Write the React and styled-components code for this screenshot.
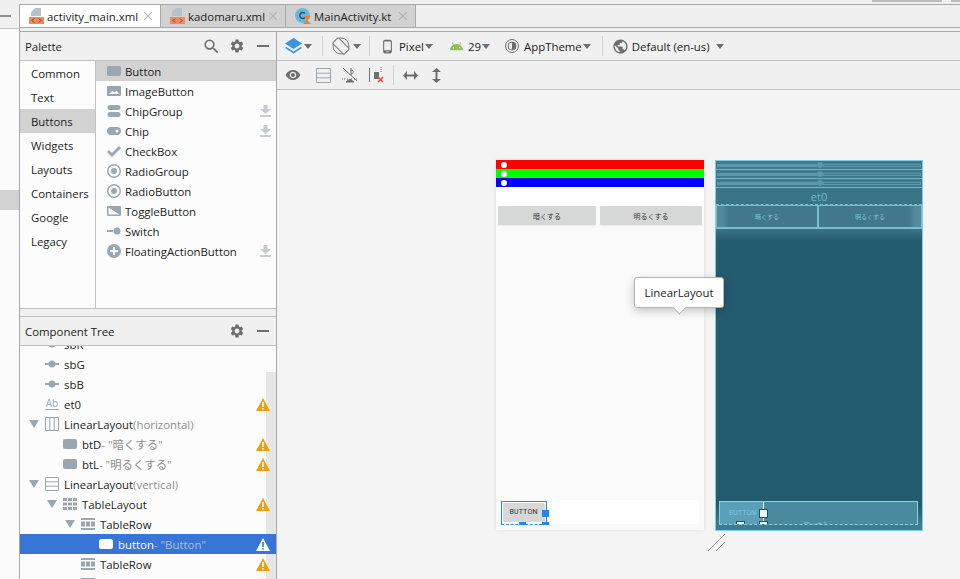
import React from 'react';
import styled, { createGlobalStyle } from 'styled-components';
import { MdSettings, MdSearch, MdVisibility, MdPublic, MdPhoneAndroid, MdAndroid } from 'react-icons/md';

const Global = createGlobalStyle`
  html, body { margin: 0; padding: 0; background: #f0f0f0; }
  * { box-sizing: border-box; }
`;

const FONT = `"Open Sans", "Noto Sans CJK JP", sans-serif`;
const ICON = '#9aa7b0';
const LINE = '#a8a8a8';

const Root = styled.div`
  display: flex;
  width: 960px;
  height: 579px;
  overflow: hidden;
  background: #f0f0f0;
  font-family: ${FONT};
  font-size: 11.4px;
  color: #1c1c1c;
`;

/* left tool strip, mostly cut off by the crop */
const Strip = styled.div`
  width: 20px;
  display: flex;
  flex-direction: column;
  border-right: 1px solid ${LINE};
  margin-top: 4px;
`;
const StripTop = styled.div`
  height: 25px;
  border-bottom: 1px solid #c4c4c4;
  padding-top: 11px;
`;
const StripDash = styled.div`
  width: 11px;
  height: 2px;
  background: #8c8c8c;
`;
const StripBody = styled.div`
  flex: 1;
  background: #fbfbfb;
  padding-top: 161px;
`;
const StripMark = styled.div`
  height: 20px;
  background: #d2d2d2;
`;

const Main = styled.div`
  flex: 1;
  min-width: 0;
  display: flex;
  flex-direction: column;
`;
const TopEdge = styled.div`
  height: 5px;
  display: flex;
  padding-left: 852px;
  border-bottom: 1px solid ${LINE};
`;
const EdgePiece = styled.div`
  height: 2px;
  width: ${(p) => p.$w}px;
  margin-right: ${(p) => p.$mr}px;
  background: #bdbdbd;
`;
const TabBar = styled.div`
  height: 23px;
  display: flex;
  border-bottom: 1px solid ${LINE};
`;
const Tab = styled.div`
  width: ${(p) => p.$w}px;
  display: flex;
  align-items: center;
  padding-left: 9px;
  font-size: 11.4px;
  background: ${(p) => (p.$active ? '#ffffff' : '#d1d1d1')};
  border-right: 1px solid ${LINE};
`;
const TabName = styled.span`
  margin-left: 3px;
  flex: 1;
  white-space: nowrap;
`;
const TabClose = styled.svg`
  width: 8px;
  height: 8px;
  margin-right: 8px;
  stroke: #b4b4b4;
  stroke-width: 1.2;
`;
const TabGap = styled.div`
  height: 4px;
  border-bottom: 1px solid ${LINE};
`;
const Workspace = styled.div`
  flex: 1;
  min-height: 0;
  display: flex;
`;

const SidePanel = styled.div`
  width: 257px;
  display: flex;
  flex-direction: column;
  border-right: 1px solid ${LINE};
`;
const PanelHead = styled.div`
  height: 29px;
  flex: none;
  display: flex;
  align-items: center;
  padding: 0 5px 0 5px;
  border-bottom: 1px solid #c2c2c2;
`;
const PanelTitle = styled.span`
  flex: 1;
`;
const PanelIcon = styled.span`
  display: flex;
  width: 26px;
  justify-content: center;
  color: #6e6e6e;
`;
const Minimize = styled.div`
  width: 12px;
  height: 2px;
  margin: 0 2px 0 7px;
  background: #6e6e6e;
`;
const PaletteBody = styled.div`
  height: 248px;
  flex: none;
  display: flex;
  background: #fcfcfc;
  border-bottom: 1px solid #c2c2c2;
`;
const Categories = styled.div`
  width: 76px;
  border-right: 1px solid #c2c2c2;
`;
const Category = styled.div`
  height: 24px;
  line-height: 26px;
  padding-left: 11px;
  background: ${(p) => (p.$on ? '#d2d2d2' : 'transparent')};
`;
const WidgetList = styled.div`
  flex: 1;
`;
const Widget = styled.div`
  height: 20px;
  display: flex;
  align-items: center;
  padding: 0 5px 0 11px;
  background: ${(p) => (p.$on ? '#d2d2d2' : 'transparent')};
`;
const WidgetName = styled.span`
  flex: 1;
  margin-left: 4px;
`;
const Splitter = styled.div`
  height: 8px;
  flex: none;
  border-bottom: 1px solid #c2c2c2;
`;
const TreeBody = styled.div`
  flex: 1;
  min-height: 0;
  position: relative;
  overflow: hidden;
  background: #fcfcfc;
`;
const TreeScroll = styled.div`
  position: absolute;
  right: 0;
  top: 26px;
  bottom: 0;
  width: 10px;
  background: #e6e6e6;
`;
const TreeRows = styled.div`
  position: relative;
  margin-top: -12px;
`;
const Row = styled.div`
  height: 20px;
  display: flex;
  align-items: center;
  padding-left: ${(p) => 8 + p.$level * 18}px;
  padding-right: 6px;
  white-space: nowrap;
  color: ${(p) => (p.$on ? '#ffffff' : 'inherit')};
  background: ${(p) => (p.$on ? '#3875d7' : 'transparent')};
`;
const Arrow = styled.span`
  width: 17px;
  flex: none;
  display: flex;
  padding-left: 1px;
`;
const Detail = styled.span`
  color: ${(p) => (p.$on ? '#a9bfe2' : '#8f8f8f')};
`;
const RowName = styled.span`
  margin-left: 5px;
`;
const Warn = styled.svg`
  width: 14px;
  height: 13px;
  margin-left: auto;
  flex: none;
`;

const Design = styled.div`
  flex: 1;
  min-width: 0;
  display: flex;
  flex-direction: column;
`;
const ToolRow = styled.div`
  height: 29px;
  flex: none;
  display: flex;
  align-items: center;
  padding-left: ${(p) => p.$pl}px;
  border-bottom: 1px solid #c2c2c2;
  white-space: nowrap;
`;
const Tool = styled.span`
  display: flex;
  align-items: center;
  margin-left: ${(p) => p.$ml || 0}px;
  color: #6e6e6e;
`;
const ToolLabel = styled.span`
  color: #1c1c1c;
  margin-left: ${(p) => p.$ml || 0}px;
`;
const Sep = styled.div`
  width: 1px;
  height: 20px;
  background: #cfcfcf;
  margin-left: ${(p) => p.$ml}px;
`;
const Caret = styled.span`
  width: 0;
  height: 0;
  margin-left: ${(p) => p.$ml || 2}px;
  border-left: 4px solid transparent;
  border-right: 4px solid transparent;
  border-top: 5px solid #6e6e6e;
`;

const Canvas = styled.div`
  flex: 1;
  position: relative;
  display: flex;
  align-items: flex-start;
  gap: 11px;
  padding: 70px 0 0 219px;
  background: #f4f4f4;
`;
const Device = styled.div`
  position: relative;
  width: 208px;
  height: 370px;
  display: flex;
  flex-direction: column;
  background: #fafafa;
  box-shadow: 0 0 4px rgba(0, 0, 0, 0.09);
`;
const SeekBar = styled.div`
  height: 9px;
  display: flex;
  align-items: center;
  padding-left: 5px;
  background: ${(p) => p.$color};
`;
const Thumb = styled.div`
  width: 6px;
  height: 6px;
  border-radius: 50%;
  background: #ffffff;
`;
const EditArea = styled.div`
  height: 19px;
  background: #ffffff;
`;
const ButtonRow = styled.div`
  display: flex;
  gap: 4px;
  padding: 0 2px;
`;
const PreviewButton = styled.div`
  width: ${(p) => p.$w}px;
  height: 19px;
  display: flex;
  align-items: center;
  justify-content: center;
  background: #d6d7d7;
  border-radius: 1px;
  font-size: 7px;
  color: #3a3a3a;
  box-shadow: 0 1px 1px rgba(0, 0, 0, 0.06);
`;
const BottomTable = styled.div`
  margin: auto 5px 6px 4px;
  height: 24px;
  background: #ffffff;
  border-radius: 3px;
  display: flex;
  position: relative;
`;
const Selected = styled.div`
  position: absolute;
  left: 1px;
  top: 1px;
  width: 46px;
  height: 24px;
  padding: 1px 0 0 1px;
  border: 1px solid #1e88f0;
  border-bottom: 1px dashed #1e88f0;
  border-left-style: solid;
`;
const TinyButton = styled.div`
  width: 41px;
  height: 18px;
  display: flex;
  align-items: center;
  justify-content: center;
  background: #d6d7d7;
  font-family: "Roboto", sans-serif;
  font-size: 7px;
  letter-spacing: 0.2px;
  color: #333333;
  box-shadow: 1px 1px 1px rgba(0, 0, 0, 0.15);
`;
const Handle = styled.div`
  position: absolute;
  left: ${(p) => p.$x}px;
  top: ${(p) => p.$y}px;
  width: 7px;
  height: ${(p) => p.$h}px;
  background: #1e88f0;
`;

const Blueprint = styled.div`
  position: relative;
  width: 208px;
  height: 371px;
  display: flex;
  flex-direction: column;
  overflow: hidden;
  background: linear-gradient(#3a7487 0, #3a7487 68px, #235c6e 80px, #235c6e 345px, #3f7b8e 362px, #3f7b8e 100%);
  border: 1px solid #7cd0e8;
`;
const BpSeek = styled.div`
  height: 9px;
  display: flex;
  align-items: center;
  padding: 0 1px;
  background: #3f7a8d;
  border-bottom: 1px solid #6fb3c8;
`;
const BpFill = styled.div`
  width: 100px;
  height: 3px;
  background: #5b97ad;
`;
const BpKnob = styled.div`
  width: 6px;
  height: 6px;
  border-radius: 50%;
  background: #5b97ad;
`;
const BpTrack = styled.div`
  flex: 1;
  height: 3px;
  border: 1px solid #5b97ad;
`;
const BpEdit = styled.div`
  height: 17px;
  display: flex;
  align-items: center;
  justify-content: center;
  color: #72b8cd;
  font-size: 11px;
  border-bottom: 1px dashed #78bdd2;
`;
const BpButtons = styled.div`
  display: flex;
  height: 24px;
  border-bottom: 1px solid #78bdd2;
`;
const BpButton = styled.div`
  flex: ${(p) => p.$grow};
  display: flex;
  align-items: center;
  justify-content: center;
  font-size: 6px;
  color: #7cc6da;
  background: linear-gradient(${(p) => p.$edge}, #528a9e 0, #528a9e 6px, #41788c 12px);
  border: 1px solid #78bdd2;
`;
const BpTable = styled.div`
  position: absolute;
  left: 3px;
  right: 4px;
  top: 340px;
  height: 24px;
  display: flex;
  overflow: hidden;
  background: #4a8a9f;
  border: 1px solid #86d4ea;
  border-bottom-style: dashed;
`;
const BpCell = styled.div`
  position: relative;
  width: 45px;
  padding: 7px 0 0 9px;
  margin: -1px 0 -1px -1px;
  background: #5c9fb8;
  border: 1px solid #ffffff;
  border-bottom: 1px dashed #a8dff0;
  font-family: "Roboto", sans-serif;
  font-size: 7px;
  color: #84c4da;
`;
const BpHandle = styled.div`
  position: absolute;
  left: ${(p) => p.$x}px;
  top: ${(p) => p.$y}px;
  width: 9px;
  height: ${(p) => p.$h}px;
  background: #eaf8fd;
  border: 1px solid #1f5466;
  border-bottom-width: ${(p) => (p.$h < 9 ? 0 : 1)}px;
`;
const BpClip = styled.span`
  margin: 18px 0 0 40px;
  font-size: 6px;
  color: #86c8dc;
`;

const Tooltip = styled.div`
  position: absolute;
  left: 357px;
  top: 187px;
  width: 90px;
  height: 31px;
  display: flex;
  align-items: center;
  justify-content: center;
  background: #ffffff;
  border: 1px solid #b4b4b4;
  border-radius: 3px;
  box-shadow: 0 3px 8px rgba(0, 0, 0, 0.22);
  &::after {
    content: '';
    position: absolute;
    left: 39px;
    bottom: -6px;
    width: 10px;
    height: 10px;
    background: #ffffff;
    border-right: 1px solid #b4b4b4;
    border-bottom: 1px solid #b4b4b4;
    transform: rotate(45deg) scale(0.9);
  }
`;
const Resize = styled.svg`
  position: absolute;
  left: 431px;
  top: 444px;
`;

const XmlIcon = () => (
  <svg width="15" height="16" viewBox="0 0 15 16">
    <path d="M6 0h6v8H2V4z" fill="#b9c1c7" />
    <rect y="9" width="15" height="7" fill="#ee8a5f" />
    <path d="M5 10.5L3 12.5l2 2M10 10.5l2 2-2 2" fill="none" stroke="#7a3a1c" strokeWidth="1" />
  </svg>
);
const KotlinIcon = () => (
  <svg width="16" height="16" viewBox="0 0 16 16">
    <circle cx="7.5" cy="7.5" r="7.5" fill="#6bb7dc" />
    <path d="M10 5.5a3 3 0 1 0 0 4" fill="none" stroke="#24566e" strokeWidth="1.5" />
    <path d="M8 16l4-4.5-4-3.5h8l-4 4 4 4z" fill="#ee8034" />
  </svg>
);
const Close = () => (
  <TabClose viewBox="0 0 8 8">
    <path d="M0 0l8 8M8 0L0 8" />
  </TabClose>
);
const Download = () => (
  <svg width="11" height="12" viewBox="0 0 11 12" fill="#c5cbd0">
    <path d="M3.5 0h4v4H11L5.500 9 0 4h3.500zM0 10h11v2H0z" />
  </svg>
);

const W = ({ children, w = 14, h = 14 }) => (
  <svg width={w} height={h} viewBox="0 0 14 14" fill={ICON} style={{ flex: 'none' }}>
    {children}
  </svg>
);
const widgetIcons = {
  button: <rect y="2" width="14" height="10" rx="2" />,
  image: <path fillRule="evenodd" d="M1 2h12a1 1 0 0 1 1 1v8a1 1 0 0 1-1 1H1a1 1 0 0 1-1-1V3a1 1 0 0 1 1-1zM2 10h10L9.500 6.500 7.500 8.500 5.500 7z" />,
  chipgroup: <path d="M3 1h8a2.500 2.500 0 0 1 0 5H3a2.500 2.500 0 0 1 0-5zM3 8h8a2.500 2.500 0 0 1 0 5H3a2.500 2.500 0 0 1 0-5z" />,
  chip: <path fillRule="evenodd" d="M4 3h6a4 4 0 0 1 0 8H4a4 4 0 0 1 0-8zM10 5.500a1.500 1.500 0 1 0 0 3 1.500 1.500 0 0 0 0-3z" />,
  check: <path d="M0 8l2-2 3 3 7-7 2 2-9 9z" />,
  radio: <path fillRule="evenodd" d="M7 0a7 7 0 1 1 0 14A7 7 0 0 1 7 0zm0 1.500a5.500 5.500 0 1 0 0 11 5.500 5.500 0 0 0 0-11zM7 4a3 3 0 1 1 0 6 3 3 0 0 1 0-6z" />,
  toggle: <path fillRule="evenodd" d="M1 2h12a1 1 0 0 1 1 1v8a1 1 0 0 1-1 1H1a1 1 0 0 1-1-1V3a1 1 0 0 1 1-1zM1.500 3.500V10.500H12.500z" />,
  switch: <path d="M0 6h6v2H0zM10 3.500a3.500 3.500 0 1 1 0 7 3.500 3.500 0 0 1 0-7z" />,
  fab: <path fillRule="evenodd" d="M7 0a7 7 0 1 1 0 14A7 7 0 0 1 7 0zM6 3v3H3v2h3v3h2V8h3V6H8V3z" />,
  seek: <path d="M0 6h5v2H0zM9 6h5v2H9zM7 3.500a3.500 3.500 0 1 1 0 7 3.500 3.500 0 0 1 0-7z" />,
  horizontal: <path fill="none" stroke={ICON} d="M.5.500h13v13H.5zM4.800.500v13M9.200.500v13" />,
  vertical: <path fill="none" stroke={ICON} d="M.5.500h13v13H.5zM.5 4.800h13M.5 9.200h13" />,
  table: <path d="M0 1h4v3H0zM5 1h4v3H5zM10 1h4v3h-4zM0 5.500h4v3H0zM5 5.500h4v3H5zM10 5.500h4v3h-4zM0 10h4v3H0zM5 10h4v3H5zM10 10h4v3h-4z" />,
  tablerow: <path fillRule="evenodd" d="M0 1h14v2H0zM0 11h14v2H0zM0 4.500h4v5H0zM5 4.500h4v5H5zM10 4.500h4v5h-4z" />,
  white: <rect y="2" width="14" height="10" rx="2.500" fill="#ffffff" />,
};

const categories = ['Common', 'Text', 'Buttons', 'Widgets', 'Layouts', 'Containers', 'Google', 'Legacy'];
const widgets = [
  { name: 'Button', icon: 'button', on: true },
  { name: 'ImageButton', icon: 'image' },
  { name: 'ChipGroup', icon: 'chipgroup', dl: true },
  { name: 'Chip', icon: 'chip', dl: true },
  { name: 'CheckBox', icon: 'check' },
  { name: 'RadioGroup', icon: 'radio' },
  { name: 'RadioButton', icon: 'radio' },
  { name: 'ToggleButton', icon: 'toggle' },
  { name: 'Switch', icon: 'switch' },
  { name: 'FloatingActionButton', icon: 'fab', dl: true },
];
const tree = [
  { level: 0, icon: 'seek', name: 'sbR' },
  { level: 0, icon: 'seek', name: 'sbG' },
  { level: 0, icon: 'seek', name: 'sbB' },
  { level: 0, text: true, name: 'et0', warn: true },
  { level: 0, open: true, icon: 'horizontal', name: 'LinearLayout', detail: '(horizontal)' },
  { level: 1, icon: 'button', name: 'btD', detail: '- "暗くする"', warn: true },
  { level: 1, icon: 'button', name: 'btL', detail: '- "明るくする"', warn: true },
  { level: 0, open: true, icon: 'vertical', name: 'LinearLayout', detail: '(vertical)' },
  { level: 1, open: true, icon: 'table', name: 'TableLayout', warn: true },
  { level: 2, open: true, icon: 'tablerow', name: 'TableRow' },
  { level: 3, icon: 'white', name: 'button', detail: '- "Button"', warn: true, on: true },
  { level: 2, icon: 'tablerow', name: 'TableRow', warn: true },
  { level: 2, icon: 'tablerow', name: 'TableRow', warn: true },
];

const TextIcon = () => (
  <svg width="14" height="14" viewBox="0 0 14 14" style={{ flex: 'none' }}>
    <text x="7" y="10" textAnchor="middle" fontSize="10" fontFamily="Open Sans, sans-serif" fill={ICON}>Ab</text>
    <rect y="12" width="14" height="1" fill={ICON} />
  </svg>
);
const WarnIcon = ({ on }) => (
  <Warn viewBox="0 0 14 13">
    <path d="M7 0l7 13H0z" fill={on ? '#ffffff' : '#eaa10e'} />
    <path d="M6.200 4h1.600v5H6.200zM6.200 10h1.600v1.600H6.200z" fill={on ? '#3875d7' : '#ffffff'} />
  </Warn>
);
const TreeArrow = () => (
  <Arrow>
    <svg width="10" height="8" viewBox="0 0 10 8">
      <path d="M0 0h10L5 8z" fill={ICON} />
    </svg>
  </Arrow>
);

const App = () => (
  <Root>
    <Global />
    <Strip>
      <StripTop><StripDash /></StripTop>
      <StripBody><StripMark /></StripBody>
    </Strip>
    <Main>
      <TopEdge>
        <EdgePiece $w={70} $mr={9} />
        <EdgePiece $w={9} $mr={0} />
      </TopEdge>
      <TabBar>
        <Tab $active $w={141}><XmlIcon /><TabName>activity_main.xml</TabName><Close /></Tab>
        <Tab $w={125}><XmlIcon /><TabName>kadomaru.xml</TabName><Close /></Tab>
        <Tab $w={130}><KotlinIcon /><TabName>MainActivity.kt</TabName><Close /></Tab>
      </TabBar>
      <TabGap />
      <Workspace>
        <SidePanel>
          <PanelHead>
            <PanelTitle>Palette</PanelTitle>
            <PanelIcon><MdSearch size={19} /></PanelIcon>
            <PanelIcon><MdSettings size={16} /></PanelIcon>
            <Minimize />
          </PanelHead>
          <PaletteBody>
            <Categories>
              {categories.map((c) => (
                <Category key={c} $on={c === 'Buttons'}>{c}</Category>
              ))}
            </Categories>
            <WidgetList>
              {widgets.map((w) => (
                <Widget key={w.name} $on={w.on}>
                  <W>{widgetIcons[w.icon]}</W>
                  <WidgetName>{w.name}</WidgetName>
                  {w.dl && <Download />}
                </Widget>
              ))}
            </WidgetList>
          </PaletteBody>
          <Splitter />
          <PanelHead>
            <PanelTitle>Component Tree</PanelTitle>
            <PanelIcon><MdSettings size={16} /></PanelIcon>
            <Minimize />
          </PanelHead>
          <TreeBody>
            <TreeScroll />
            <TreeRows>
              {tree.map((r, i) => (
                <Row key={i} $level={r.level} $on={r.on}>
                  {r.open ? <TreeArrow /> : <Arrow />}
                  {r.text ? <TextIcon /> : <W>{widgetIcons[r.icon]}</W>}
                  <RowName>
                    {r.name}
                    {r.detail && <Detail $on={r.on}>{r.detail}</Detail>}
                  </RowName>
                  {r.warn && <WarnIcon on={r.on} />}
                </Row>
              ))}
            </TreeRows>
          </TreeBody>
        </SidePanel>
        <Design>
          <ToolRow $pl={8}>
            <Tool>
              <svg width="17" height="16" viewBox="0 0 17 16">
                <path d="M8.500 0L17 5.500 8.500 11 0 5.500z" fill="#3d94dc" />
                <path d="M1.500 9L8.500 13.500 15.500 9 17 10l-8.500 5.500L0 10z" fill="#3d94dc" />
              </svg>
              <Caret $ml={2} />
            </Tool>
            <Sep $ml={10} />
            <Tool $ml={9}>
              <svg width="18" height="18" viewBox="0 0 18 18" fill="none" stroke="#7a7a7a">
                <circle cx="9" cy="9" r="8" />
                <rect x="5" y="1" width="8" height="16" rx="1" transform="rotate(-45 9 9)" fill="#f0f0f0" />
              </svg>
              <Caret $ml={3} />
            </Tool>
            <Sep $ml={8} />
            <Tool $ml={10}><MdPhoneAndroid size={15} /></Tool>
            <ToolLabel $ml={4}>Pixel</ToolLabel>
            <Caret $ml={1} />
            <Tool $ml={16}><MdAndroid size={15} color="#8cc152" /></Tool>
            <ToolLabel $ml={4}>29</ToolLabel>
            <Caret $ml={1} />
            <Tool $ml={15}>
              <svg width="14" height="14" viewBox="0 0 14 14">
                <circle cx="7" cy="7" r="6.500" fill="none" stroke="#6e6e6e" />
                <path d="M7 3a4 4 0 0 1 0 8z" fill="#6e6e6e" />
                <circle cx="7" cy="7" r="4" fill="none" stroke="#6e6e6e" />
              </svg>
            </Tool>
            <ToolLabel $ml={5}>AppTheme</ToolLabel>
            <Caret $ml={1} />
            <Sep $ml={11} />
            <Tool $ml={9}><MdPublic size={17} /></Tool>
            <ToolLabel $ml={3}>Default (en-us)</ToolLabel>
            <Caret $ml={6} />
          </ToolRow>
          <ToolRow $pl={8}>
            <Tool><MdVisibility size={16} /></Tool>
            <Tool $ml={15}>
              <svg width="15" height="15" viewBox="0 0 15 15" fill="none" stroke={ICON}>
                <path d="M.5 .5h14v14H.5zM.5 5.200h14M.5 9.800h14" />
              </svg>
            </Tool>
            <Tool $ml={11}>
              <svg width="16" height="16" viewBox="0 0 16 16" fill="none" stroke="#6e6e6e">
                <path d="M1 1l14 13M9 1v7M9 3c3 0 3 4 0 4" />
                <path d="M0 12h3M5 12h1M9 12h1M12 12h4" strokeDasharray="1 1" />
                <path d="M4 15l4-3 4 3z" fill="#6e6e6e" />
              </svg>
            </Tool>
            <Tool $ml={11}>
              <svg width="16" height="16" viewBox="0 0 16 16">
                <path d="M.5 1v14" stroke="#6e6e6e" fill="none" />
                <path d="M5 5h5v7H5z" fill="#6e6e6e" />
                <path d="M12 0v6" stroke="#6e6e6e" strokeDasharray="1 1" fill="none" />
                <path d="M9 10l5 5M14 10l-5 5" stroke="#e5484d" strokeWidth="1.5" fill="none" />
              </svg>
            </Tool>
            <Sep $ml={8} />
            <Tool $ml={9}>
              <svg width="15" height="9" viewBox="0 0 15 9" fill="#6e6e6e">
                <path d="M0 4.500L4 0v3.500h7V0l4 4.500L11 9V5.500H4V9z" />
              </svg>
            </Tool>
            <Tool $ml={14}>
              <svg width="9" height="15" viewBox="0 0 9 15" fill="#6e6e6e">
                <path d="M4.500 0L9 4H5.500v7H9l-4.500 4L0 11h3.500V4H0z" />
              </svg>
            </Tool>
          </ToolRow>
          <Canvas>
            <Device>
              <SeekBar $color="#ff0000"><Thumb /></SeekBar>
              <SeekBar $color="#00ff00"><Thumb /></SeekBar>
              <SeekBar $color="#0000ff"><Thumb /></SeekBar>
              <EditArea />
              <ButtonRow>
                <PreviewButton $w={98}>暗くする</PreviewButton>
                <PreviewButton $w={102}>明るくする</PreviewButton>
              </ButtonRow>
              <BottomTable>
                <Selected>
                  <TinyButton>BUTTON</TinyButton>
                  <Handle $x={40} $y={8} $h={7} />
                  <Handle $x={17} $y={20} $h={3} />
                  <Handle $x={40} $y={20} $h={3} />
                </Selected>
              </BottomTable>
            </Device>
            <Blueprint>
              {[0, 1, 2].map((i) => (
                <BpSeek key={i}><BpFill /><BpKnob /><BpTrack /></BpSeek>
              ))}
              <BpEdit>et0</BpEdit>
              <BpButtons>
                <BpButton $grow={102} $edge="to right">暗くする</BpButton>
                <BpButton $grow={104} $edge="to left">明るくする</BpButton>
              </BpButtons>
              <BpTable>
                <BpCell>
                  BUTTON
                  <BpHandle $x={39} $y={7} $h={9} />
                  <BpHandle $x={16} $y={19} $h={4} />
                  <BpHandle $x={39} $y={19} $h={4} />
                </BpCell>
                <BpClip>暗くする</BpClip>
              </BpTable>
            </Blueprint>
            <Tooltip>LinearLayout</Tooltip>
            <Resize width="18" height="18" viewBox="0 0 18 18" fill="none" stroke="#6a6a6a" strokeDasharray="1 0.5">
              <path d="M0 17L17 0M8 17l9-9" />
            </Resize>
          </Canvas>
        </Design>
      </Workspace>
    </Main>
  </Root>
);

export default App;
